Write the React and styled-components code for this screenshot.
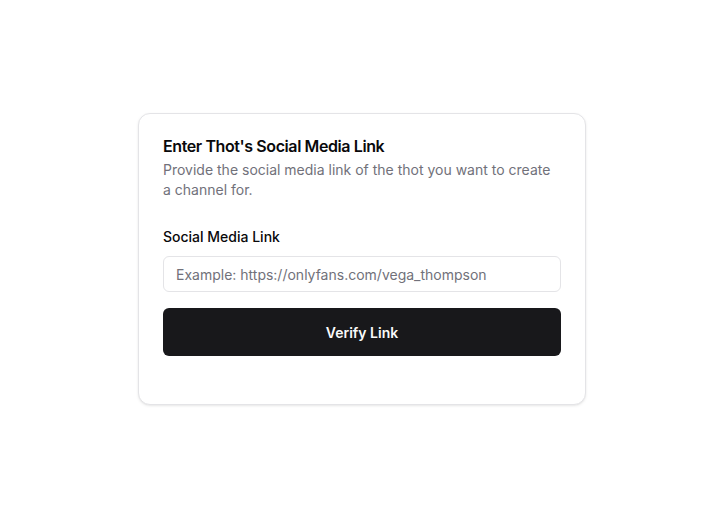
import React from "react";
import styled, { createGlobalStyle } from "styled-components";

const Global = createGlobalStyle`
  html, body { margin: 0; padding: 0; background: #ffffff; }
  body { font-family: Inter, "Noto Sans", sans-serif; color: #09090b; -webkit-font-smoothing: antialiased; }
  * { box-sizing: border-box; }
`;

const Page = styled.div`
  width: 702px;
  height: 516px;
  display: flex;
  align-items: flex-start;
  justify-content: flex-start;
  padding: 113px 0 0 138px;
`;

const Card = styled.div`
  width: 448px;
  height: 292px;
  border: 1px solid #e4e4e7;
  border-radius: 12px;
  background: #fff;
  box-shadow: 0 1px 3px rgba(0,0,0,0.08), 0 1px 2px -1px rgba(0,0,0,0.08);
  padding: 24px;
  display: flex;
  flex-direction: column;
`;

const Title = styled.h3`
  margin: 0;
  font-size: 16px;
  line-height: 16px;
  font-weight: 600;
  letter-spacing: -0.4px;
  color: #09090b;
`;

const Description = styled.p`
  margin: 6px 0 0;
  font-size: 14px;
  line-height: 20px;
  color: #71717a;
`;

const Label = styled.label`
  margin-top: 30px;
  font-size: 14px;
  line-height: 14px;
  font-weight: 500;
  color: #09090b;
`;

const Input = styled.input`
  margin-top: 12px;
  height: 36px;
  width: 100%;
  border: 1px solid #e4e4e7;
  border-radius: 6px;
  padding: 0 12px;
  font-family: inherit;
  font-size: 14px;
  color: #09090b;
  background: #fff;
  outline: none;
  &::placeholder { color: #71717a; }
`;

const Button = styled.button`
  margin-top: 16px;
  height: 48px;
  width: 100%;
  border: none;
  border-radius: 6px;
  background: #18181b;
  color: #fafafa;
  font-family: inherit;
  font-size: 14px;
  font-weight: 600;
  cursor: pointer;
`;

export default function App() {
  return (
    <>
      <Global />
      <Page>
        <Card>
          <Title>Enter Thot's Social Media Link</Title>
          <Description>
            Provide the social media link of the thot you want to create a channel for.
          </Description>
          <Label htmlFor="link">Social Media Link</Label>
          <Input id="link" placeholder="Example: https://onlyfans.com/vega_thompson" />
          <Button>Verify Link</Button>
        </Card>
      </Page>
    </>
  );
}
